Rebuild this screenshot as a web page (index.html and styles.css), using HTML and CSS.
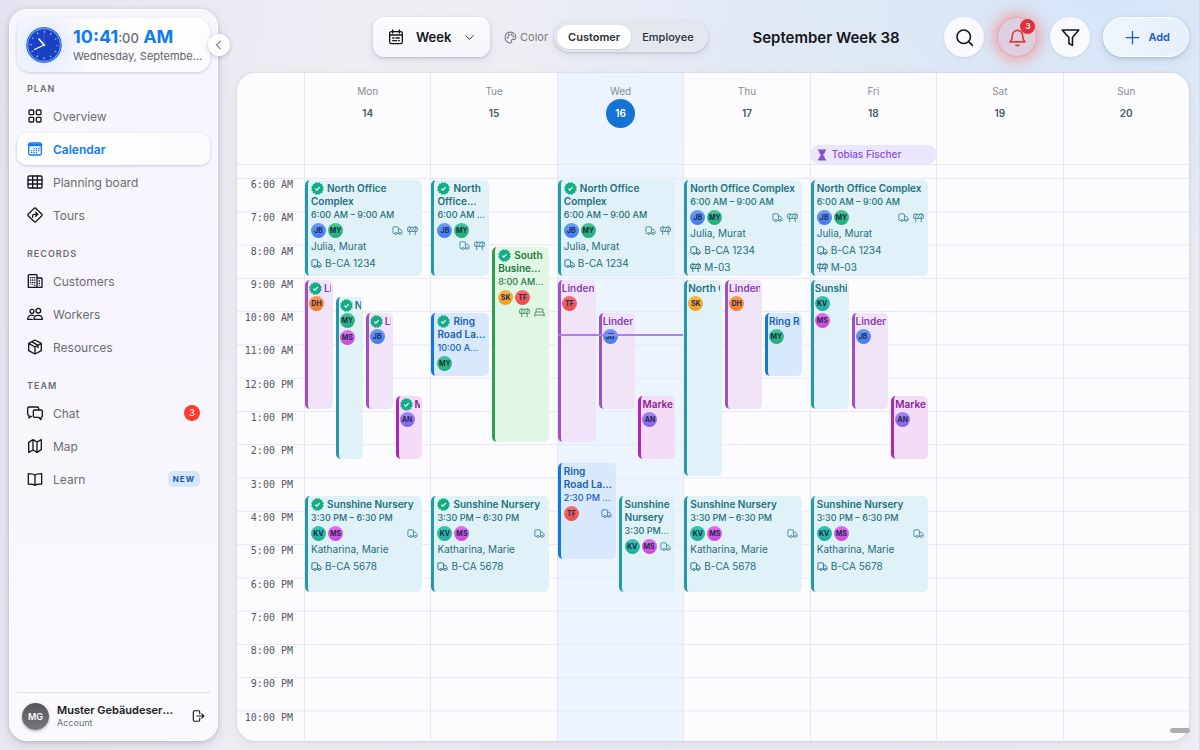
FILE: index.html
```html
<!DOCTYPE html>
<html lang="en">
<head>
<meta charset="utf-8">
<meta name="viewport" content="width=device-width, initial-scale=1">
<title>Calendar – September Week 38</title>
<link rel="stylesheet" href="styles.css">
</head>
<body>
<svg class="sprite" aria-hidden="true">
  <symbol id="i-truck" viewBox="0 0 24 24"><path d="M6 18.500H3.500a1.500 1.500 0 0 1-1.500-1.500V5.500A1.500 1.500 0 0 1 3.500 4h9A1.500 1.500 0 0 1 14 5.500v13h-3M14 9h4l4 5v4.500h-1.500M14 18.500h1.500"/><circle cx="8.500" cy="18.500" r="2.300"/><circle cx="18" cy="18.500" r="2.300"/></symbol>
  <symbol id="i-barrier" viewBox="0 0 24 24"><rect x="1.500" y="5" width="21" height="9" rx="1"/><path d="M6 2v3M18 2v3M6 14v8M18 14v8M4 14l5-9M10 14l5-9M16 14l5-9"/></symbol>
  <symbol id="i-bed" viewBox="0 0 24 24"><path d="M2 21v-8l2.500-2V5.500A1.500 1.500 0 0 1 6 4h12a1.500 1.500 0 0 1 1.500 1.500V11l2.500 2v8M2 17.500h20M4.500 11h15"/></symbol>
  <symbol id="i-ok" viewBox="0 0 24 24"><g fill="#12ae87" stroke="#12ae87" stroke-width="2" stroke-linejoin="round"><rect x="4.300" y="4.300" width="15.400" height="15.400"/><rect x="4.300" y="4.300" width="15.400" height="15.400" transform="rotate(30 12 12)"/><rect x="4.300" y="4.300" width="15.400" height="15.400" transform="rotate(60 12 12)"/></g><path d="M8 12.300l2.800 2.700L16 9.500" fill="none" stroke="#fff" stroke-width="2.200"/></symbol>
</svg>

<div class="app">
  <aside class="sidebar">
    <section class="clock-card">
      <svg class="clock" viewBox="0 0 36 36" aria-hidden="true">
        <circle cx="18" cy="18" r="18" fill="#2f6fe4"/><circle cx="18" cy="18" r="16.800" fill="#6ea0f5"/><circle cx="18" cy="18" r="15.800" fill="#1a41c4"/>
        <circle cx="18" cy="18" r="13.200" fill="none" stroke="#b9cdfb" stroke-width="2" stroke-dasharray="1 5.912" stroke-dashoffset=".5"/>
        <path d="M18 18V5.500" stroke="#7a56c8" stroke-width=".7"/><path d="M18 18l-5-6" stroke="#fff" stroke-width="1.600" stroke-linecap="round"/><path d="M18 18L8.500 22.500" stroke="#fff" stroke-width="1.200" stroke-linecap="round"/><circle cx="18" cy="18" r="1.300" fill="#dfe8ff"/>
      </svg>
      <div class="clock-text">
        <p class="clock-time">10:41<small>:00</small> AM</p>
        <p class="clock-date">Wednesday, September 16</p>
      </div>
    </section>
    <button class="collapse" aria-label="Collapse sidebar"><svg class="line" viewBox="0 0 24 24"><path d="M15 4l-8 8 8 8"/></svg></button>

    <nav class="nav" aria-label="Main">
      <h2>Plan</h2>
      <a href="#overview"><svg class="line" viewBox="0 0 24 24"><rect x="3" y="3" width="7" height="7" rx="1.500"/><rect x="14" y="3" width="7" height="7" rx="1.500"/><rect x="3" y="14" width="7" height="7" rx="1.500"/><rect x="14" y="14" width="7" height="7" rx="1.500"/></svg>Overview</a>
      <a href="#calendar" class="active" aria-current="page"><svg class="line" viewBox="0 0 24 24"><rect x="2.500" y="3" width="19" height="18" rx="2.500"/><path d="M3 6h18" stroke-width="4"/><path d="M10 11.500h9M6 14.500h13M6 17.500h9" stroke-dasharray="2 1.500" stroke-linecap="butt"/></svg>Calendar</a>
      <a href="#board"><svg class="line" viewBox="0 0 24 24"><rect x="1.500" y="3" width="21" height="18" rx="2"/><path d="M1.500 9h21M1.500 15h21M8.500 3v18M15.500 3v18"/></svg>Planning board</a>
      <a href="#tours"><svg class="line" viewBox="0 0 24 24"><path d="M10.600 2.100a2 2 0 0 1 2.800 0l8.500 8.500a2 2 0 0 1 0 2.800l-8.500 8.500a2 2 0 0 1-2.800 0l-8.500-8.500a2 2 0 0 1 0-2.800zM8.500 15.500V13a2 2 0 0 1 2-2h5M13 8l3 3-3 3"/></svg>Tours</a>
      <h2>Records</h2>
      <a href="#customers"><svg class="line" viewBox="0 0 24 24"><path d="M2 21.500V3.500A1 1 0 0 1 3 2.500h11a1 1 0 0 1 1 1v18M15 7.500h6.500a1 1 0 0 1 1 1v13H2"/><path d="M5.500 6v12M8.500 6v12M11.500 6v15M18.500 11v8" stroke-dasharray="2 1.700" stroke-linecap="butt" stroke-width="2"/></svg>Customers</a>
      <a href="#workers"><svg class="line" viewBox="0 0 24 24"><circle cx="7.500" cy="8" r="3"/><circle cx="17" cy="7" r="3.500"/><path d="M10 14.500C5 12 1 15.500 1 20h7M10.500 20c0-8 12.500-8 12.500 0z"/></svg>Workers</a>
      <a href="#resources"><svg class="line" viewBox="0 0 24 24"><path d="M12 1.500l9.500 5v11l-9.500 5-9.500-5v-11zM2.500 6.500l9.500 5.500 9.500-5.500M12 12v10.500M7 4l9.500 5.500V13"/></svg>Resources</a>
      <h2>Team</h2>
      <a href="#chat"><svg class="line" viewBox="0 0 24 24"><path d="M7 17H6l-3 2.500V15.500A2 2 0 0 1 1 13.500V5a2 2 0 0 1 2-2h12.500a2 2 0 0 1 2 2v2"/><path d="M11.500 7.500H21a2 2 0 0 1 2 2v7a2 2 0 0 1-2 2V22l-3.500-3.500h-6a2 2 0 0 1-2-2v-7a2 2 0 0 1 2-2z"/></svg>Chat<span class="count">3</span></a>
      <a href="#map"><svg class="line" viewBox="0 0 24 24"><path d="M2.500 6.500L9 2.500l6 3.500 6.500-3.500v15L15 21.500 9 18l-6.500 3.500zM9 2.500V18M15 6v15.500"/></svg>Map</a>
      <a href="#learn"><svg class="line" viewBox="0 0 24 24"><path d="M12 6.500C10 4.500 7 4 2 4v15.500c4 0 8 0 10 2 2-2 6-2 10-2V4c-5 0-8 .5-10 2.500zM12 6.500v15"/></svg>Learn<span class="new">NEW</span></a>
    </nav>

    <footer class="account">
      <span class="account-pic">MG</span>
      <div class="account-text"><strong>Muster Gebäudeservice</strong><span>Account</span></div>
      <button class="logout" aria-label="Log out"><svg class="line" viewBox="0 0 24 24"><path d="M15 8V5a2 2 0 0 0-2-2H6a2 2 0 0 0-2 2v14a2 2 0 0 0 2 2h7a2 2 0 0 0 2-2v-3M10 12h12M18.500 8.500L22 12l-3.500 3.500"/></svg></button>
    </footer>
  </aside>

  <main class="main">
    <header class="topbar">
      <label class="view">
        <svg class="line" viewBox="0 0 24 24"><rect x="2.500" y="4" width="19" height="18" rx="2.500"/><path d="M2.500 9h19M7 1.500V6M17 1.500V6M7 13.500h2M12 13.500h5M7 17.500h6M16 17.500h1"/></svg>
        <select aria-label="View"><option>Week</option></select>
        <svg class="line chevron" viewBox="0 0 24 24"><path d="M4 8l8 8 8-8"/></svg>
      </label>
      <span class="color-label"><svg class="line" viewBox="0 0 24 24"><path d="M12 2a10 10 0 1 0 0 20c1.800 0 2.500-1.200 2-2.500-.8-2 .2-4 2.500-4H19c2 0 3-1.500 3-3.500C22 6 17.500 2 12 2z"/><circle cx="7" cy="12" r="1"/><circle cx="9" cy="7.500" r="1"/><circle cx="14" cy="6.500" r="1"/><circle cx="17.500" cy="10" r="1"/></svg>Color</span>
      <div class="segmented"><button class="on" aria-pressed="true">Customer</button><button aria-pressed="false">Employee</button></div>
      <h1>September Week 38</h1>
      <div class="actions">
        <button class="round" aria-label="Search"><svg class="line" viewBox="0 0 24 24"><circle cx="11" cy="11" r="8.500"/><path d="M17.500 17.500L22 22"/></svg></button>
        <button class="round bell" aria-label="Notifications"><svg class="line" viewBox="0 0 24 24"><path d="M2.500 17.500c2.200-1.800 3-4 3-8a6.500 6.500 0 0 1 13 0c0 4 .8 6.200 3 8zM10 21.500c1 1.200 3 1.200 4 0"/></svg><span class="bell-count">3</span></button>
        <button class="round" aria-label="Filter"><svg class="line" viewBox="0 0 24 24"><path d="M1.500 2.500h21L14.500 12v10l-4.500-2.500V12z"/></svg></button>
        <button class="add"><svg class="line" viewBox="0 0 24 24"><path d="M12 2v20M2 12h20"/></svg>Add</button>
      </div>
    </header>

    <section class="calendar">
      <div class="row head">
        <div></div>
        <div class="day">Mon<b>14</b></div>
        <div class="day">Tue<b>15</b></div>
        <div class="day today">Wed<b>16</b></div>
        <div class="day">Thu<b>17</b></div>
        <div class="day">Fri<b>18</b></div>
        <div class="day">Sat<b>19</b></div>
        <div class="day">Sun<b>20</b></div>
      </div>
      <div class="row allday">
        <div></div><div class="cell"></div><div class="cell"></div><div class="cell today"></div><div class="cell"></div>
        <div class="cell"><span class="absence"><svg viewBox="0 0 24 24"><path d="M4 1h16v3h-2c0 4-1.500 6-4.500 8 3 2 4.500 4 4.500 8h2v3H4v-3h2c0-4 1.500-6 4.500-8C7.500 10 6 8 6 4H4z"/></svg>Tobias Fischer</span></div>
        <div class="cell"></div><div class="cell"></div>
      </div>
      <div class="row lead">
        <div></div><div class="cell"></div><div class="cell"></div><div class="cell today"></div><div class="cell"></div><div class="cell"></div><div class="cell"></div><div class="cell"></div>
      </div>
      <div class="row hours">
        <div class="times">
          <span>6:00 AM</span><span>7:00 AM</span><span>8:00 AM</span><span>9:00 AM</span><span>10:00 AM</span><span>11:00 AM</span><span>12:00 PM</span><span>1:00 PM</span><span>2:00 PM</span><span>3:00 PM</span><span>4:00 PM</span><span>5:00 PM</span><span>6:00 PM</span><span>7:00 PM</span><span>8:00 PM</span><span>9:00 PM</span><span>10:00 PM</span>
        </div>

        <div class="cell lanes">
          <article class="event teal" style="grid-area:1/1/7/13"><h3><svg class="ok"><use href="#i-ok"/></svg>North Office Complex</h3><p class="time">6:00 AM – 9:00 AM</p><div class="crew"><i class="av jb">JB</i><i class="av my">MY</i><span class="gear"><svg><use href="#i-truck"/></svg><svg><use href="#i-barrier"/></svg></span></div><p class="info">Julia, Murat</p><p class="info"><svg><use href="#i-truck"/></svg>B-CA 1234</p></article>
          <article class="event slim purple" style="grid-area:7/1/15/4"><h3><svg class="ok"><use href="#i-ok"/></svg>Linden Clinic</h3><div class="crew"><i class="av dh">DH</i></div></article>
          <article class="event slim teal next" style="grid-area:8/4/18/7"><h3><svg class="ok"><use href="#i-ok"/></svg>North Office</h3><div class="crew"><i class="av my">MY</i><i class="av ms">MS</i></div></article>
          <article class="event slim purple next" style="grid-area:9/7/15/10"><h3><svg class="ok"><use href="#i-ok"/></svg>Linden Clinic</h3><div class="crew"><i class="av jb">JB</i></div></article>
          <article class="event slim magenta next" style="grid-area:14/10/18/13"><h3><svg class="ok"><use href="#i-ok"/></svg>Market Hall</h3><div class="crew"><i class="av an">AN</i></div></article>
          <article class="event teal" style="grid-area:20/1/26/13"><h3><svg class="ok"><use href="#i-ok"/></svg>Sunshine Nursery</h3><p class="time">3:30 PM – 6:30 PM</p><div class="crew"><i class="av kv">KV</i><i class="av ms">MS</i><span class="gear"><svg><use href="#i-truck"/></svg></span></div><p class="info">Katharina, Marie</p><p class="info"><svg><use href="#i-truck"/></svg>B-CA 5678</p></article>
        </div>

        <div class="cell lanes">
          <article class="event teal" style="grid-area:1/1/7/7"><h3><svg class="ok"><use href="#i-ok"/></svg>North<br>Office…</h3><p class="time">6:00 AM – 9:00 AM</p><div class="crew"><i class="av jb">JB</i><i class="av my">MY</i><span class="gear"><svg><use href="#i-truck"/></svg><svg><use href="#i-barrier"/></svg></span></div></article>
          <article class="event green next" style="grid-area:5/7/17/13"><h3><svg class="ok"><use href="#i-ok"/></svg>South<br>Busine…</h3><p class="time">8:00 AM – 2:00 PM</p><div class="crew"><i class="av sk">SK</i><i class="av tf">TF</i><span class="gear"><svg><use href="#i-barrier"/></svg><svg><use href="#i-bed"/></svg></span></div></article>
          <article class="event blue" style="grid-area:9/1/13/7"><h3><svg class="ok"><use href="#i-ok"/></svg>Ring<br><span class="keep">Road La…</span></h3><p class="time">10:00 AM – 12:00 PM</p><div class="crew"><i class="av my">MY</i></div></article>
          <article class="event teal" style="grid-area:20/1/26/13"><h3><svg class="ok"><use href="#i-ok"/></svg>Sunshine Nursery</h3><p class="time">3:30 PM – 6:30 PM</p><div class="crew"><i class="av kv">KV</i><i class="av ms">MS</i><span class="gear"><svg><use href="#i-truck"/></svg></span></div><p class="info">Katharina, Marie</p><p class="info"><svg><use href="#i-truck"/></svg>B-CA 5678</p></article>
        </div>

        <div class="cell lanes today">
          <article class="event teal" style="grid-area:1/1/7/13"><h3><svg class="ok"><use href="#i-ok"/></svg>North Office Complex</h3><p class="time">6:00 AM – 9:00 AM</p><div class="crew"><i class="av jb">JB</i><i class="av my">MY</i><span class="gear"><svg><use href="#i-truck"/></svg><svg><use href="#i-barrier"/></svg></span></div><p class="info">Julia, Murat</p><p class="info"><svg><use href="#i-truck"/></svg>B-CA 1234</p></article>
          <article class="event slim purple" style="grid-area:7/1/17/5"><h3>Linden Clinic</h3><div class="crew"><i class="av tf">TF</i></div></article>
          <article class="event slim purple next" style="grid-area:9/5/15/9"><h3>Linden Clinic</h3><div class="crew"><i class="av jb">JB</i></div></article>
          <article class="event slim magenta next" style="grid-area:14/9/18/13"><h3>Market Hall</h3><div class="crew"><i class="av an">AN</i></div></article>
          <article class="event blue" style="grid-area:18/1/24/7"><h3>Ring<br><span class="keep">Road La…</span></h3><p class="time">2:30 PM – 5:30 PM</p><div class="crew"><i class="av tf">TF</i><span class="gear"><svg><use href="#i-truck"/></svg></span></div></article>
          <article class="event teal next" style="grid-area:20/7/26/13"><h3>Sunshine Nursery</h3><p class="time">3:30 PM – 6:30 PM</p><div class="crew"><i class="av kv">KV</i><i class="av ms">MS</i><span class="gear"><svg><use href="#i-truck"/></svg></span></div></article>
          <span class="now" style="top:27.5%"></span>
        </div>

        <div class="cell lanes">
          <article class="event teal" style="grid-area:1/1/7/13"><h3>North Office Complex</h3><p class="time">6:00 AM – 9:00 AM</p><div class="crew"><i class="av jb">JB</i><i class="av my">MY</i><span class="gear"><svg><use href="#i-truck"/></svg><svg><use href="#i-barrier"/></svg></span></div><p class="info">Julia, Murat</p><p class="info"><svg><use href="#i-truck"/></svg>B-CA 1234</p><p class="info"><svg><use href="#i-barrier"/></svg>M-03</p></article>
          <article class="event slim teal" style="grid-area:7/1/19/5"><h3>North Office</h3><div class="crew"><i class="av sk">SK</i></div></article>
          <article class="event slim purple next" style="grid-area:7/5/15/9"><h3>Linden Clinic</h3><div class="crew"><i class="av dh">DH</i></div></article>
          <article class="event slim blue next" style="grid-area:9/9/13/13"><h3>Ring Road</h3><div class="crew"><i class="av my">MY</i></div></article>
          <article class="event teal" style="grid-area:20/1/26/13"><h3>Sunshine Nursery</h3><p class="time">3:30 PM – 6:30 PM</p><div class="crew"><i class="av kv">KV</i><i class="av ms">MS</i><span class="gear"><svg><use href="#i-truck"/></svg></span></div><p class="info">Katharina, Marie</p><p class="info"><svg><use href="#i-truck"/></svg>B-CA 5678</p></article>
        </div>

        <div class="cell lanes">
          <article class="event teal" style="grid-area:1/1/7/13"><h3>North Office Complex</h3><p class="time">6:00 AM – 9:00 AM</p><div class="crew"><i class="av jb">JB</i><i class="av my">MY</i><span class="gear"><svg><use href="#i-truck"/></svg><svg><use href="#i-barrier"/></svg></span></div><p class="info">Julia, Murat</p><p class="info"><svg><use href="#i-truck"/></svg>B-CA 1234</p><p class="info"><svg><use href="#i-barrier"/></svg>M-03</p></article>
          <article class="event slim teal" style="grid-area:7/1/15/5"><h3>Sunshine Nursery</h3><div class="crew"><i class="av kv">KV</i><i class="av ms">MS</i></div></article>
          <article class="event slim purple next" style="grid-area:9/5/15/9"><h3>Linden Clinic</h3><div class="crew"><i class="av jb">JB</i></div></article>
          <article class="event slim magenta next" style="grid-area:14/9/18/13"><h3>Market Hall</h3><div class="crew"><i class="av an">AN</i></div></article>
          <article class="event teal" style="grid-area:20/1/26/13"><h3>Sunshine Nursery</h3><p class="time">3:30 PM – 6:30 PM</p><div class="crew"><i class="av kv">KV</i><i class="av ms">MS</i><span class="gear"><svg><use href="#i-truck"/></svg></span></div><p class="info">Katharina, Marie</p><p class="info"><svg><use href="#i-truck"/></svg>B-CA 5678</p></article>
        </div>
        <div class="cell"></div>
        <div class="cell"></div>
      </div>
    </section>
    <span class="scroll-thumb"></span>
  </main>
</div>
</body>
</html>
```
FILE: styles.css
```css
* { box-sizing: border-box; }
body, h1, h2, h3, p { margin: 0; }
body {
  font-family: Inter, "Liberation Sans", sans-serif;
  font-size: 13px;
  color: #15151a;
  background:
    radial-gradient(ellipse 50% 40% at 92% 0, #d6e6f7, transparent),
    linear-gradient(100deg, #e7e4f1 0, #efeef4 30%, #e9ebf3 60%, #efedf3 100%);
}
button, select { font: inherit; color: inherit; border: 0; padding: 0; background: none; }
a { color: inherit; text-decoration: none; }
.sprite { position: absolute; width: 0; height: 0; }
.line { fill: none; stroke: currentColor; stroke-width: 2; stroke-linecap: round; stroke-linejoin: round; flex: none; }

.app {
  display: flex;
  height: 100vh;
  gap: 19px;
  padding: 9px 10px 9px 9px;
  overflow: hidden;
  border-right: 1px dotted #cdd2dc;
}

/* Sidebar */
.sidebar {
  position: relative;
  flex: none;
  width: 209px;
  display: flex;
  flex-direction: column;
  padding: 8px 7px 1px;
  border-radius: 18px;
  border: 1px solid #fff;
  background: linear-gradient(#f7f6fd, #f8f4fd 40%, #fafafe);
  box-shadow: 0 1px 4px rgba(60, 60, 100, .25), 0 6px 14px rgba(60, 60, 100, .1);
}
.clock-card {
  display: flex;
  align-items: center;
  gap: 11px;
  height: 54px;
  padding: 0 6px 0 9px;
  border-radius: 14px;
  background: radial-gradient(circle at 27px 27px, #dde7fb, transparent 50px), linear-gradient(#fff, #fafaff);
  box-shadow: 0 1px 3px rgba(60, 60, 100, .25);
}
.clock { width: 36px; height: 36px; flex: none; border-radius: 50%; }
.clock-text { min-width: 0; }
.clock-time { font-size: 18px; line-height: 20px; font-weight: 700; color: #0f7bf2; white-space: nowrap; }
.clock-time small { font-size: 13px; font-weight: 500; color: #6c6c74; }
.clock-date { font-size: 11px; line-height: 16px; color: #5f5f68; white-space: nowrap; overflow: hidden; text-overflow: ellipsis; }
.collapse {
  position: absolute;
  right: -13px;
  top: 24px;
  width: 22px;
  height: 22px;
  display: grid;
  place-items: center;
  border-radius: 50%;
  background: #fff;
  color: #3a3a40;
  box-shadow: 0 1px 4px rgba(60, 60, 100, .3);
}
.collapse svg { width: 12px; height: 12px; }

.nav { flex: 1; display: flex; flex-direction: column; gap: 1px; }
.nav h2 {
  margin: 15px 0 0;
  padding: 0 10px 4px;
  font-size: 9px;
  line-height: 12px;
  font-weight: 600;
  letter-spacing: 1px;
  text-transform: uppercase;
  color: #6c6c74;
}
.nav a + h2 { margin-top: 16px; }
.nav h2:first-child { margin-top: 11px; }
.nav a {
  display: flex;
  align-items: center;
  gap: 10px;
  height: 32px;
  padding: 0 10px;
  border-radius: 10px;
  font-size: 12px;
  color: #6c6c74;
}
.nav svg { width: 16px; height: 16px; color: #15151a; }
.nav .active { color: #0f7bf2; font-weight: 600; background: linear-gradient(90deg, #fff, #fbfbfd); box-shadow: 0 1px 3px rgba(60, 60, 100, .25); }
.nav .active svg { color: #0f7bf2; }
.count, .new { margin-left: auto; }
.count { width: 16px; height: 16px; border-radius: 50%; background: #ff3b30; color: #fff; font-size: 9px; line-height: 16px; text-align: center; }
.new { padding: 0 5px; border-radius: 5px; background: #d5e6fb; color: #1558a8; font-size: 8px; line-height: 16px; font-weight: 700; letter-spacing: 1px; }

.account {
  display: flex;
  align-items: center;
  gap: 8px;
  height: 47px;
  padding: 0 5px;
  border-top: 1px solid #dcdce4;
}
.account-pic {
  flex: none;
  width: 27px;
  height: 27px;
  border-radius: 50%;
  background: linear-gradient(#55555a, #77777c);
  color: #fff;
  font-size: 9px;
  line-height: 27px;
  font-weight: 600;
  text-align: center;
  box-shadow: 0 1px 3px rgba(0, 0, 0, .3);
}
.account-text { flex: 1; min-width: 0; display: flex; flex-direction: column; }
.account-text strong { font-size: 11px; line-height: 14px; font-weight: 600; white-space: nowrap; overflow: hidden; text-overflow: ellipsis; }
.account-text span { font-size: 9px; line-height: 12px; color: #6c6c74; }
.logout { display: grid; margin-left: 6px; }
.logout svg { width: 14px; height: 14px; }

/* Top bar */
.main { position: relative; flex: 1; min-width: 0; display: flex; flex-direction: column; gap: 16px; }
.topbar { display: flex; align-items: center; height: 40px; margin: 8px 0 0 136px; flex: none; }
.view {
  position: relative;
  display: flex;
  align-items: center;
  gap: 12px;
  height: 40px;
  padding: 0 15px;
  border-radius: 11px;
  background: linear-gradient(#fcfcff, #f5f5fb);
  box-shadow: 0 1px 3px rgba(60, 60, 90, .25), 0 4px 10px rgba(60, 60, 90, .08);
}
.view svg { width: 16px; height: 16px; }
.view select { appearance: none; font-size: 13px; font-weight: 600; }
.view .chevron { width: 11px; height: 11px; }
.color-label { display: flex; align-items: center; gap: 3px; margin: 0 6px 0 14px; font-size: 11px; color: #7a7a82; }
.color-label svg { width: 13px; height: 13px; }
.segmented {
  display: flex;
  padding: 2px;
  border-radius: 15px;
  border: 1px solid #e9ebf2;
  background: #e3e7ee;
  box-shadow: 0 1px 3px rgba(60, 60, 90, .2), 0 3px 8px rgba(60, 60, 90, .08);
}
.segmented button { height: 24px; padding: 0 11px; border-radius: 12px; font-size: 11px; font-weight: 500; color: #2a2d33; }
.segmented .on { background: #fff; font-weight: 600; box-shadow: 0 1px 2px rgba(60, 60, 90, .15); }
h1 { flex: 1; text-align: center; font-size: 15px; font-weight: 600; white-space: nowrap; }
.actions { display: flex; gap: 13px; }
.round {
  position: relative;
  width: 40px;
  height: 40px;
  display: grid;
  place-items: center;
  border-radius: 50%;
  background: #f9fafe;
  box-shadow: 0 1px 3px rgba(60, 60, 90, .12);
}
.round svg { width: 19px; height: 19px; }
.bell { background: #dccfe0; color: #e5383b; border: 1px solid #eba4ad; box-shadow: 0 0 16px 2px rgba(255, 90, 90, .6); }
.bell-count { position: absolute; top: 1px; right: 1px; width: 15px; height: 15px; border-radius: 50%; background: #e0323a; color: #fff; font-size: 8px; line-height: 15px; font-weight: 600; text-align: center; }
.add {
  display: flex;
  align-items: center;
  gap: 8px;
  height: 40px;
  padding: 0 18px 0 21px;
  border-radius: 20px;
  border: 1px solid #fff;
  background: linear-gradient(90deg, #eef6fe, #e6effa);
  color: #2058d8;
  font-size: 11px;
  font-weight: 600;
  box-shadow: 0 1px 3px rgba(60, 90, 140, .25), 0 4px 10px rgba(60, 90, 140, .12);
}
.add svg { width: 15px; height: 15px; }

/* Calendar */
.calendar {
  flex: 1;
  min-height: 0;
  overflow: hidden;
  border-radius: 18px;
  background: #fcfcff;
  box-shadow: 0 0 2px rgba(60, 60, 90, .2), 0 4px 10px rgba(60, 60, 90, .08);
}
.row { display: grid; grid-template-columns: 67px repeat(7, minmax(0, 1fr)); }
.cell, .day { border-left: 1px solid #e7e5f8; }
.today { background: rgba(222, 236, 254, .55); }
.day {
  display: flex;
  flex-direction: column;
  align-items: center;
  gap: 1px;
  padding-top: 11px;
  height: 72px;
  font-size: 10px;
  line-height: 14px;
  color: #8b8b93;
}
.day b { width: 29px; height: 29px; border-radius: 50%; line-height: 29px; text-align: center; font-weight: 600; color: #4a5560; }
.day.today b { background: #1673d4; color: #fff; }
.day.today { background: #eaf3fe; }
.allday { height: 19px; }
.absence {
  display: flex;
  align-items: center;
  gap: 4px;
  height: 19px;
  padding: 0 5px;
  border-radius: 8px;
  background: #ece6fc;
  color: #8450dc;
  font-size: 10px;
  line-height: 19px;
  font-weight: 500;
}
.absence svg { width: 12px; height: 12px; fill: #8450dc; }
.lead { height: 14px; border-top: 1px solid #e7e5f8; }
.hours {
  height: 566px;
  grid-template-rows: 100%;
  background: linear-gradient(#e7e5f8 1px, transparent 1px) 0 0 / 100% calc(100% / 17);
}
.times { display: grid; grid-template-rows: repeat(17, 1fr); padding-right: 11px; text-align: right; font: 10px/13px "DejaVu Sans Mono", "Liberation Mono", monospace; color: #55555c; }
.lanes {
  position: relative;
  display: grid;
  grid-template-columns: repeat(12, minmax(0, 1fr));
  grid-template-rows: repeat(34, minmax(0, 1fr));
  column-gap: 2px;
  padding-right: 8px;
}
.now { position: absolute; left: 0; right: 0; height: 2px; background: #a880f0; }

.event {
  min-width: 0;
  min-height: 0;
  margin: 2px 0;
  padding: 2px 4px 0 3px;
  overflow: hidden;
  border-left: 3px solid;
  border-radius: 5px;
  font-size: 10px;
}
.event.next { margin-left: 1px; }
.event.slim { padding: 2px 2px 0 1px; }
.event h3 { font-size: 10px; line-height: 13px; font-weight: 600; }
.slim h3 { white-space: nowrap; overflow: hidden; }
.keep { white-space: nowrap; }
.ok { width: 13px; height: 13px; margin-right: 3px; vertical-align: -3px; }
.slim .ok { margin-right: 2px; }
.time { font-size: 9px; line-height: 14px; font-weight: 500; white-space: nowrap; overflow: hidden; text-overflow: ellipsis; }
.crew { display: flex; flex-wrap: wrap; align-items: center; gap: 2px; padding-top: 1px; }
.slim .crew { flex-direction: column; align-items: flex-start; }
.av { width: 15px; height: 15px; border-radius: 50%; font-size: 7px; line-height: 15px; font-weight: 700; font-style: normal; text-align: center; color: #1b2a4a; }
.gear { display: flex; gap: 4px; margin-left: auto; opacity: .8; }
.event svg:not(.ok) { width: 11px; height: 11px; fill: none; stroke: currentColor; stroke-width: 2; stroke-linejoin: round; }
.info { display: flex; align-items: center; gap: 3px; line-height: 17px; white-space: nowrap; }

.teal { background: #e0f2f7; border-color: #2599a8; color: #216f80; }
.purple { background: #f1e3f8; border-color: #a04fcb; color: #8541ab; }
.magenta { background: #f4dcf6; border-color: #ae25bd; color: #8a1f95; }
.blue { background: #d8e9fd; border-color: #1277e2; color: #155fb4; }
.green { background: #e1f7e5; border-color: #2f9f4c; color: #23773a; }

.jb { background: linear-gradient(#6a9cf5, #4079ee); }
.my { background: linear-gradient(#45c592, #1eae76); }
.ms { background: linear-gradient(#e070ee, #cc45e0); }
.dh { background: linear-gradient(#fb9a50, #f27a28); }
.an { background: linear-gradient(#a684f6, #8460ec); }
.sk { background: linear-gradient(#f8b840, #ee9d22); }
.tf { background: linear-gradient(#f67070, #ea4a4a); }
.kv { background: linear-gradient(#3cc5b0, #1cad98); }

.scroll-thumb { position: absolute; right: -1px; bottom: 8px; width: 20px; height: 5px; border-radius: 3px; background: #adadb0; }
```
